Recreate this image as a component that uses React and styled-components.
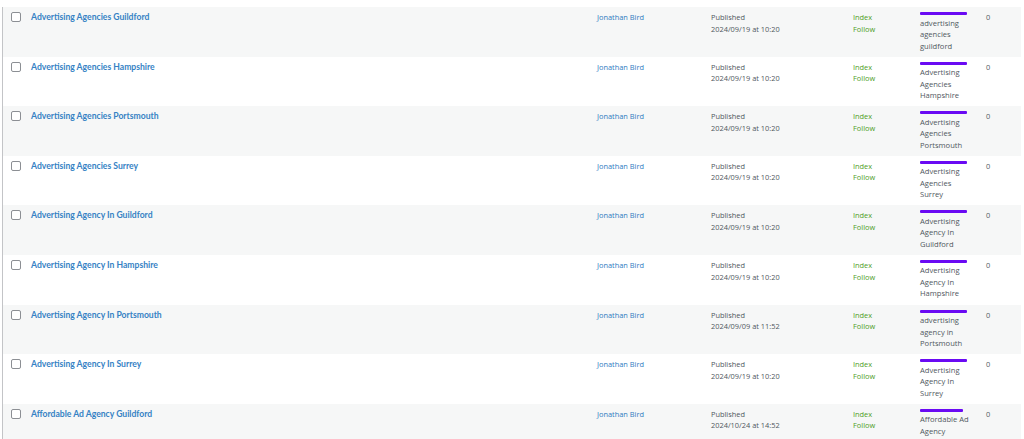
import React from 'react';
import styled, { createGlobalStyle } from 'styled-components';

const GlobalStyle = createGlobalStyle`
  html, body {
    margin: 0;
    padding: 0;
    background: #ffffff;
    overflow: hidden;
  }
  body {
    font-family: 'Open Sans', 'Noto Sans', sans-serif;
    font-size: 7.4px;
    color: #50575e;
  }
`;

const Page = styled.div`
  width: 1024px;
  height: 439px;
  overflow: hidden;
  background: #ffffff;
  padding-top: 7px;
  box-sizing: border-box;
`;

const Table = styled.div`
  margin-left: 2px;
  width: 1018px;
  border-left: 1px solid #c3c4c7;
`;

const Row = styled.div`
  display: grid;
  grid-template-columns: 28px 566px 114px 142px 67px 66px 1fr;
  height: 49.6px;
  box-sizing: border-box;
  padding-top: 5px;
  background: ${(p) => (p.$striped ? '#f6f7f7' : '#ffffff')};
`;

const Cell = styled.div`
  line-height: 11.6px;
  min-width: 0;
`;

const CheckCell = styled.div`
  padding-left: 8px;
`;

const Checkbox = styled.span`
  display: block;
  width: 10px;
  height: 10px;
  box-sizing: border-box;
  border: 1px solid #8c8f94;
  border-radius: 2px;
  background: #ffffff;
`;

const Title = styled.a`
  font-family: 'Lato', 'Open Sans', sans-serif;
  font-weight: 700;
  font-size: 8.6px;
  line-height: 11.6px;
  color: #3582c4;
  text-decoration: none;
`;

const Author = styled.a`
  color: #2f7bbf;
  text-decoration: none;
`;

const Robots = styled.div`
  color: #4f9e1f;
`;

const KeywordCell = styled.div`
  width: 52px;
  font-size: 7.6px;
  line-height: 11.5px;
  color: #50575e;
`;

const ScoreBar = styled.div`
  height: 3px;
  width: ${(p) => p.$width}px;
  margin-bottom: 2.5px;
  background: #6a0af3;
  border-radius: 1px;
`;

const Count = styled.div`
  line-height: 11.6px;
  color: #50575e;
`;

const posts = [
  { title: 'Advertising Agencies Guildford', date: '2024/09/19 at 10:20', keyword: 'advertising agencies guildford' },
  { title: 'Advertising Agencies Hampshire', date: '2024/09/19 at 10:20', keyword: 'Advertising Agencies Hampshire' },
  { title: 'Advertising Agencies Portsmouth', date: '2024/09/19 at 10:20', keyword: 'Advertising Agencies Portsmouth' },
  { title: 'Advertising Agencies Surrey', date: '2024/09/19 at 10:20', keyword: 'Advertising Agencies Surrey' },
  { title: 'Advertising Agency In Guildford', date: '2024/09/19 at 10:20', keyword: 'Advertising Agency In Guildford' },
  { title: 'Advertising Agency In Hampshire', date: '2024/09/19 at 10:20', keyword: 'Advertising Agency In Hampshire' },
  { title: 'Advertising Agency In Portsmouth', date: '2024/09/09 at 11:52', keyword: 'advertising agency in Portsmouth' },
  { title: 'Advertising Agency In Surrey', date: '2024/09/19 at 10:20', keyword: 'Advertising Agency In Surrey' },
  { title: 'Affordable Ad Agency Guildford', date: '2024/10/24 at 14:52', keyword: 'Affordable Ad Agency', bar: 43 },
];

const App = () => (
  <Page>
    <GlobalStyle />
    <Table>
      {posts.map((post, i) => (
        <Row key={post.title} $striped={i % 2 === 0}>
          <CheckCell>
            <Checkbox />
          </CheckCell>
          <Cell>
            <Title href="#">{post.title}</Title>
          </Cell>
          <Cell>
            <Author href="#">Jonathan Bird</Author>
          </Cell>
          <Cell>
            Published
            <br />
            {post.date}
          </Cell>
          <Cell>
            <Robots>
              Index
              <br />
              Follow
            </Robots>
          </Cell>
          <KeywordCell>
            <ScoreBar $width={post.bar || 47} />
            {post.keyword}
          </KeywordCell>
          <Count>0</Count>
        </Row>
      ))}
    </Table>
  </Page>
);

export default App;
